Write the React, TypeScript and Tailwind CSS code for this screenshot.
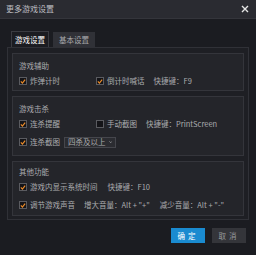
import React from "react";

const Check = ({ checked = true }: { checked?: boolean }) => (
  <span className="flex h-[8px] w-[8px] shrink-0 items-center justify-center border border-[#5a5b60] bg-[#141418]">
    {checked && (
      <svg width="7" height="7" viewBox="0 0 7 7">
        <path d="M1 3.4 L2.8 5.3 L6 1.2" stroke="#ec8c2a" strokeWidth="1.4" fill="none" />
      </svg>
    )}
  </span>
);

const Item = ({ label, checked = true, w }: { label: string; checked?: boolean; w?: string }) => (
  <div className={`flex items-center gap-[3px] whitespace-nowrap ${w ?? ""}`}>
    <Check checked={checked} />
    <span>{label}</span>
  </div>
);

export default function App() {
  return (
    <div
      className="relative h-[255px] w-[256px] overflow-hidden whitespace-nowrap bg-[#1b1c21] text-[7.5px] leading-none text-[#abacaf]"
      style={{ fontFamily: '"Noto Sans CJK SC", "Noto Sans", sans-serif' }}
    >
      {/* title bar */}
      <div className="flex h-[19px] items-center justify-between border-b border-[#34353b] bg-[#2a2b31] pl-[6px] pr-[7px]">
        <span className="text-[8px] text-[#bdbec1]">更多游戏设置</span>
        <svg width="8" height="8" viewBox="0 0 8 8">
          <path d="M1 1 L7 7 M7 1 L1 7" stroke="#e6e6e6" strokeWidth="1.4" />
        </svg>
      </div>

      {/* tabs */}
      <div className="flex items-end gap-[4px] px-[11px] pt-[12px]">
        <div className="flex h-[16px] w-[38px] items-center justify-center border border-b-0 border-[#3a3b41] bg-[#1b1c21] text-[#ffffff]">
          游戏设置
        </div>
        <div className="flex h-[15px] w-[42px] items-center justify-center bg-[#303137] text-[#a9aaad]">
          基本设置
        </div>
      </div>

      {/* panel */}
      <div className="mx-[7px] flex flex-col gap-[5px] border border-[#303137] bg-[#1e1f24] px-[4px] pb-[3px] pt-[5px]">
        {/* group 1 */}
        <div className="border border-[#34353b] bg-[#24252a] px-[6px] pb-[1px] pt-[5px]">
          <div className="flex h-[14px] items-center">游戏辅助</div>
          <div className="flex h-[16px] items-center">
            <Item label="炸弹计时" w="w-[77px]" />
            <Item label="倒计时喊话" />
            <span className="ml-[9px]">快捷键：F9</span>
          </div>
        </div>

        {/* group 2 */}
        <div className="border border-[#34353b] bg-[#24252a] px-[6px] pb-[5px] pt-[5px]">
          <div className="flex h-[14px] items-center">游戏击杀</div>
          <div className="flex h-[16px] items-center">
            <Item label="连杀提醒" w="w-[77px]" />
            <Item label="手动截图" checked={false} />
            <span className="ml-[9px]">快捷键：PrintScreen</span>
          </div>
          <div className="mt-[2px] flex h-[16px] items-center">
            <Item label="连杀截图" />
            <div className="ml-[4px] flex h-[11px] w-[52px] items-center gap-[3px] border border-[#45464c] bg-[#2b2c31] px-[3px]">
              <span>四杀及以上</span>
              <svg width="5" height="4" viewBox="0 0 5 4">
                <path d="M0.5 1 L2.5 3 L4.5 1" stroke="#b4b5b8" strokeWidth="0.9" fill="none" />
              </svg>
            </div>
          </div>
        </div>

        {/* group 3 */}
        <div className="border border-[#34353b] bg-[#24252a] px-[6px] pb-[2px] pt-[3px]">
          <div className="flex h-[14px] items-center">其他功能</div>
          <div className="flex h-[16px] items-center">
            <Item label="游戏内显示系统时间" />
            <span className="ml-[10px]">快捷键：F10</span>
          </div>
          <div className="mt-[2px] flex h-[16px] items-center">
            <Item label="调节游戏声音" />
            <span className="ml-[9px]">增大音量：Alt + "+"</span>
            <span className="ml-[10px]">减少音量：Alt + "-"</span>
          </div>
        </div>
      </div>

      {/* buttons */}
      <div className="flex justify-end gap-[7px] pr-[10px] pt-[8px]">
        <div className="flex h-[15px] w-[34px] items-center justify-center bg-[#1a8bd0] tracking-[3px] text-[#ffffff]">
          确定
        </div>
        <div className="flex h-[15px] w-[34px] items-center justify-center bg-[#34353a] tracking-[3px] text-[#9a9b9e]">
          取消
        </div>
      </div>
    </div>
  );
}
